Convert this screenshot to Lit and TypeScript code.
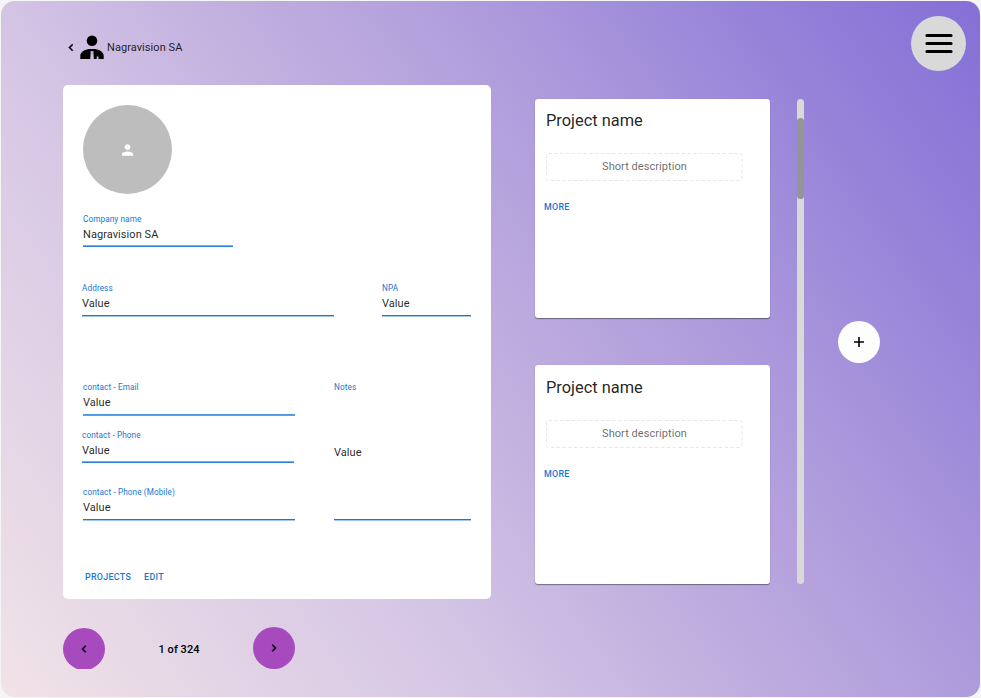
import { LitElement, html, css } from "lit";
import { customElement, property } from "lit/decorators.js";

@customElement("text-field")
class TextField extends LitElement {
  @property() label = "";
  @property() value = "";

  static styles = css`
    :host {
      display: flex;
      flex-direction: column;
      height: 34px;
      box-sizing: border-box;
      flex-shrink: 0;
    }
    .label {
      font-size: 8.2px;
      line-height: 10px;
      letter-spacing: 0.1px;
      color: #1976d2;
      white-space: nowrap;
    }
    .value {
      flex: 1;
      display: flex;
      align-items: center;
      padding-bottom: var(--value-lift, 0);
      font-size: 11px;
      line-height: 16px;
      letter-spacing: 0.06px;
      color: rgba(0, 0, 0, 0.87);
    }
    .line {
      height: 2px;
      background: linear-gradient(var(--line-top, #1976d2) 50%, var(--line-bottom, #a3c8ed) 50%);
    }
  `;

  render() {
    return html`
      <div class="label">${this.label}</div>
      <div class="value">${this.value}</div>
      <div class="line"></div>
    `;
  }
}

@customElement("project-card")
class ProjectCard extends LitElement {
  static styles = css`
    :host {
      display: flex;
      flex-direction: column;
      align-items: flex-start;
      box-sizing: border-box;
      width: 235px;
      height: 219px;
      padding: 11px 0 0 9px;
      background: #fff;
      border-radius: 3px;
      box-shadow: 0 1px 1px rgba(0, 0, 0, 0.4), 0 0 1px rgba(0, 0, 0, 0.15);
    }
    .title {
      margin-left: 2px;
      font-size: 16.4px;
      line-height: 22px;
      color: rgba(0, 0, 0, 0.87);
    }
    .description {
      display: flex;
      align-items: center;
      justify-content: center;
      position: relative;
      width: 197px;
      height: 28px;
      margin: 21px 0 0 2px;
      font-size: 11px;
      letter-spacing: 0.06px;
      color: rgba(0, 0, 0, 0.6);
    }
    .text {
      margin-top: -1px;
    }
    .outline {
      position: absolute;
      inset: 0;
    }
    .more {
      margin-top: 20px;
      font-size: 8.9px;
      font-weight: 500;
      line-height: 12px;
      letter-spacing: 0.25px;
      color: #1976d2;
    }
  `;

  render() {
    return html`
      <div class="title">Project name</div>
      <div class="description">
        <svg class="outline" width="197" height="28" fill="none">
          <rect x=".5" y=".5" width="195.5" height="27" rx="2" stroke="#e6e6e6" stroke-dasharray="3.4 2.4" />
        </svg>
        <span class="text">Short description</span>
      </div>
      <div class="more">MORE</div>
    `;
  }
}

@customElement("app-root")
class AppRoot extends LitElement {
  static styles = css`
    :host {
      display: block;
      box-sizing: border-box;
      width: 981px;
      height: 698px;
      padding: 1px;
      background: #f5f5f5;
      font-family: Roboto, sans-serif;
      color: rgba(0, 0, 0, 0.87);
      overflow: hidden;
    }
    .shell {
      display: flex;
      flex-direction: column;
      width: 979px;
      height: 696px;
      border-radius: 14px;
      background: linear-gradient(54deg, #f1e3e7 0%, #d6c6e5 32%, #c0aedf 50%, #ae9bdc 66%, #9683d9 84%, #8470d6 100%);
    }
    .header {
      display: flex;
      justify-content: space-between;
      height: 84px;
      flex-shrink: 0;
      box-sizing: border-box;
      padding: 15px 14px 0 66px;
    }
    .crumb {
      display: flex;
      align-items: center;
      height: 62px;
      font-size: 11px;
      letter-spacing: 0.06px;
    }
    .person {
      margin: 0 3px 0 5px;
    }
    .menu {
      display: flex;
      flex-direction: column;
      align-items: center;
      justify-content: center;
      width: 55px;
      height: 55px;
      border-radius: 50%;
      background: #d9d9d9;
    }
    .main {
      display: flex;
      align-items: flex-start;
      height: 514px;
      padding-left: 62px;
    }
    .company {
      display: flex;
      flex-direction: column;
      box-sizing: border-box;
      width: 428px;
      height: 514px;
      padding: 20px 19px 0 20px;
      background: #fff;
      border-radius: 5px;
    }
    .avatar {
      display: flex;
      align-items: center;
      justify-content: center;
      width: 89px;
      height: 89px;
      border-radius: 50%;
      background: #bdbdbd;
    }
    .name,
    .phone {
      height: 33px;
      --line-top: #75ade4;
      --line-bottom: #2f83d6;
    }
    .name {
      width: 150px;
      margin-top: 20px;
    }
    .address {
      display: flex;
      gap: 48px;
      margin: 36px 0 0 -1px;
    }
    .street {
      width: 252px;
    }
    .npa {
      width: 89px;
    }
    .details {
      display: flex;
      gap: 39px;
      margin-top: 65px;
    }
    .contacts {
      width: 212px;
    }
    .email {
      --line-top: #4b94de;
      --line-bottom: #5f9fe1;
    }
    .phone {
      margin: 14px 1px 0 -1px;
      width: 212px;
    }
    .mobile {
      margin-top: 24px;
    }
    .notes {
      width: 137px;
      height: 139px;
      --value-lift: 5px;
    }
    .actions {
      display: flex;
      gap: 13px;
      margin: 50px 0 0 2px;
      font-size: 8.9px;
      font-weight: 500;
      line-height: 12px;
      letter-spacing: 0.3px;
      color: #1976d2;
    }
    .projects {
      display: flex;
      flex-direction: column;
      gap: 47px;
      margin: 14px 0 0 44px;
    }
    .last {
      padding-top: 12px;
    }
    .track {
      width: 7px;
      height: 485px;
      box-sizing: border-box;
      margin: 14px 0 0 27px;
      padding-top: 19px;
      border-radius: 4px;
      background: #d9d9d9;
    }
    .thumb {
      height: 81px;
      border-radius: 4px;
      background: #959595;
    }
    .round {
      display: flex;
      align-items: center;
      justify-content: center;
      width: 42px;
      height: 42px;
      border-radius: 50%;
    }
    .add {
      margin: 236px 0 0 34px;
      background: #fdfdfd;
    }
    .pager {
      display: flex;
      align-items: center;
      padding: 28px 0 0 62px;
    }
    .step {
      background: #a64abe;
    }
    .previous {
      margin: 1px 0 -1px;
      clip-path: inset(0 0 1px 0);
    }
    .count {
      width: 148px;
      padding-top: 2px;
      text-align: center;
      font-size: 11px;
      font-weight: 500;
      letter-spacing: 0.05px;
      color: #000;
    }
  `;

  chevron(path: string) {
    return html`<svg width="14" height="14" viewBox="0 0 24 24"><path d=${path} stroke="#000" stroke-width=".8" /></svg>`;
  }

  render() {
    const left = "M15.41 7.41 14 6l-6 6 6 6 1.41-1.41L10.83 12z";
    const right = "M10 6 8.59 7.41 13.17 12l-4.58 4.59L10 18l6-6z";
    return html`
      <div class="shell">
        <div class="header">
          <div class="crumb">
            <svg width="8" height="14" viewBox="5.5 -1 13 24"><path d=${left} stroke="#000" stroke-width=".8" /></svg>
            <svg class="person" width="24" height="24" viewBox="0 0 24 24">
              <circle cx="12" cy="5.8" r="5.3" />
              <path d="M.3 24v-3.500c0-4 5.500-6.600 10.200-6.600h3c4.700 0 10.200 2.600 10.200 6.600V24h-5.200v-2.500h-1.800V24h-3.300l-.6-6.200.7-1.600h-3l.7 1.600-.6 6.200z" />
              <path d="M10.700 16.200h.7v7.800h-1zM12.700 16.200h.7l.3 7.800h-.7z" fill="#d0c0e4" />
            </svg>
            Nagravision SA
          </div>
          <div class="menu">
            <svg width="28" height="24" stroke="#000" stroke-width="3.2" stroke-linecap="round">
              <path d="M2 3.500h24M2 11.500h24M2 19.500h24" />
            </svg>
          </div>
        </div>
        <div class="main">
          <div class="company">
            <div class="avatar">
              <svg width="17" height="17" viewBox="0 -.7 24 24" fill="#fff">
                <path d="M12 12c2.210 0 4-1.790 4-4s-1.790-4-4-4-4 1.790-4 4 1.790 4 4 4m0 2c-2.670 0-8 1.340-8 4v2h16v-2c0-2.660-5.330-4-8-4" />
              </svg>
            </div>
            <text-field class="name" label="Company name" value="Nagravision SA"></text-field>
            <div class="address">
              <text-field class="street" label="Address" value="Value"></text-field>
              <text-field class="npa" label="NPA" value="Value"></text-field>
            </div>
            <div class="details">
              <div class="contacts">
                <text-field class="email" label="contact - Email" value="Value"></text-field>
                <text-field class="phone" label="contact - Phone" value="Value"></text-field>
                <text-field class="mobile" label="contact - Phone (Mobile)" value="Value"></text-field>
              </div>
              <text-field class="notes" label="Notes" value="Value"></text-field>
            </div>
            <div class="actions"><span>PROJECTS</span><span>EDIT</span></div>
          </div>
          <div class="projects">
            <project-card></project-card>
            <project-card class="last"></project-card>
          </div>
          <div class="track"><div class="thumb"></div></div>
          <div class="round add">
            <svg width="12" height="12" stroke="#000" stroke-width="1.6"><path d="M6 1v10M1 6h10" /></svg>
          </div>
        </div>
        <div class="pager">
          <div class="round step previous">${this.chevron(left)}</div>
          <div class="count">1 of 324</div>
          <div class="round step">${this.chevron(right)}</div>
        </div>
      </div>
    `;
  }
}
